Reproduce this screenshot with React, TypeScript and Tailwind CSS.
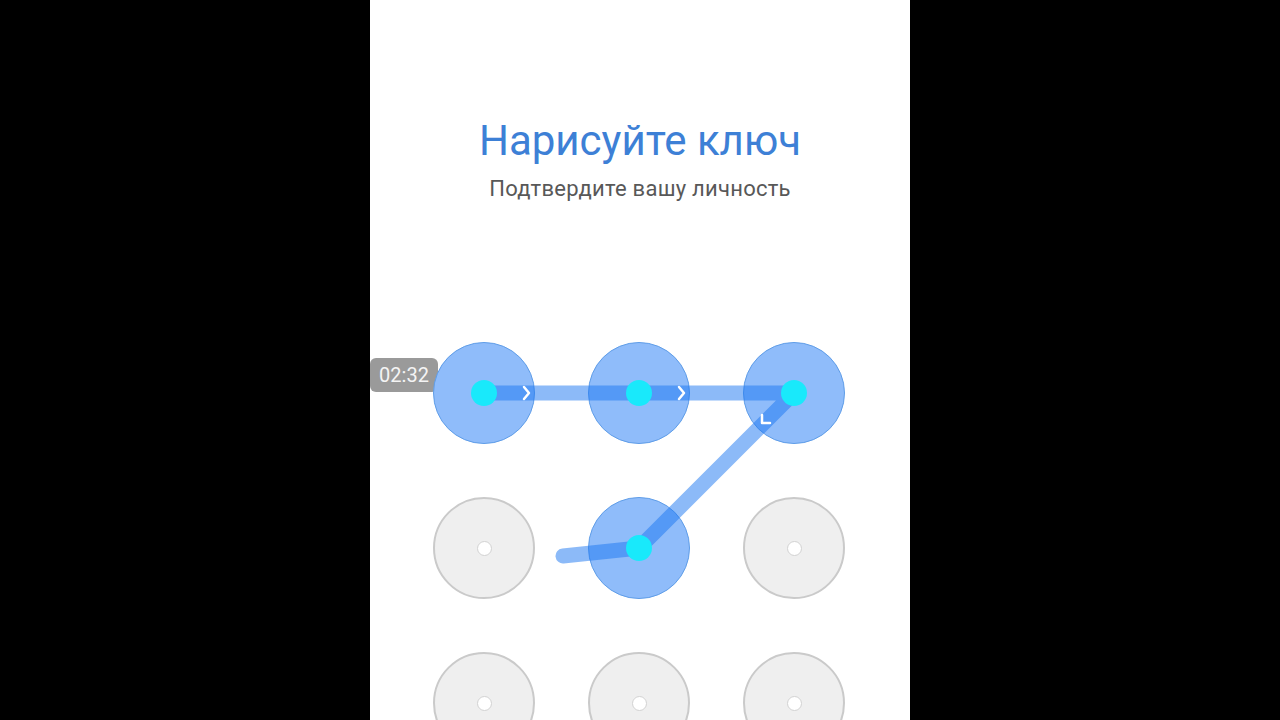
import React from "react";

const nodes = [0, 1, 2, 3, 4, 5, 6, 7, 8];
const active = [0, 1, 2, 4];

// node centres, relative to the grid box (102px cells, 53px gaps)
const c = (i: number) => ({ x: 51 + (i % 3) * 155, y: 51 + Math.floor(i / 3) * 155 });

function Node({ on }: { on: boolean }) {
  if (on) {
    return <div className="w-[102px] h-[102px] rounded-full bg-[#8fbcfa] border-[1.5px] border-[#5f9de8]" />;
  }
  return (
    <div className="w-[102px] h-[102px] rounded-full bg-[#efefef] border-2 border-[#cacaca] flex items-center justify-center">
      <div className="w-[15px] h-[15px] rounded-full bg-white border border-[#d2d2d2]" />
    </div>
  );
}

export default function App() {
  const p = [c(0), c(1), c(2), c(4)];
  const path = `M ${p[0].x} ${p[0].y} L ${p[1].x} ${p[1].y} L ${p[2].x} ${p[2].y} L ${p[3].x} ${p[3].y} L 130 214`;

  return (
    <div className="w-full h-[720px] bg-black flex justify-center overflow-hidden" style={{ fontFamily: "Roboto, 'Noto Sans', sans-serif" }}>
      <div className="relative w-[540px] h-[720px] bg-white overflow-hidden">
        <div className="absolute left-0 top-[358px] w-[68px] h-[34px] rounded-md bg-[#9a9a9a] flex items-center justify-center text-[20px] text-[#f4f4f4]">
          02:32
        </div>

        <div className="pt-[116px] flex flex-col items-center">
          <h1 className="text-[42px] leading-[50px] text-[#3d80d6]">Нарисуйте ключ</h1>
          <p className="mt-[8px] text-[22px] leading-[30px] tracking-[0.25px] text-[#585858]">Подтвердите вашу личность</p>
        </div>

        <div className="relative ml-[63px] mt-[138px] w-[412px] grid grid-cols-3 gap-[53px]">
          {nodes.map((i) => (
            <Node key={i} on={active.includes(i)} />
          ))}

          <svg className="absolute left-0 top-0" width="412" height="412" viewBox="0 0 412 412">
            <path d={path} fill="none" stroke="#1975f1" strokeOpacity="0.5" strokeWidth="15" strokeLinecap="round" strokeLinejoin="round" />
            {p.map((q, k) => (
              <circle key={k} cx={q.x} cy={q.y} r="13" fill="#19e9fb" />
            ))}
            <path d="M 91 45 L 96 51 L 91 57" fill="none" stroke="#ffffff" strokeWidth="2.5" strokeLinecap="round" strokeLinejoin="round" />
            <path d="M 246 45 L 251 51 L 246 57" fill="none" stroke="#ffffff" strokeWidth="2.5" strokeLinecap="round" strokeLinejoin="round" />
            <path d="M 329 73 L 329 81 L 337 81" fill="none" stroke="#ffffff" strokeWidth="2.5" strokeLinecap="round" strokeLinejoin="round" />
          </svg>
        </div>
      </div>
    </div>
  );
}
